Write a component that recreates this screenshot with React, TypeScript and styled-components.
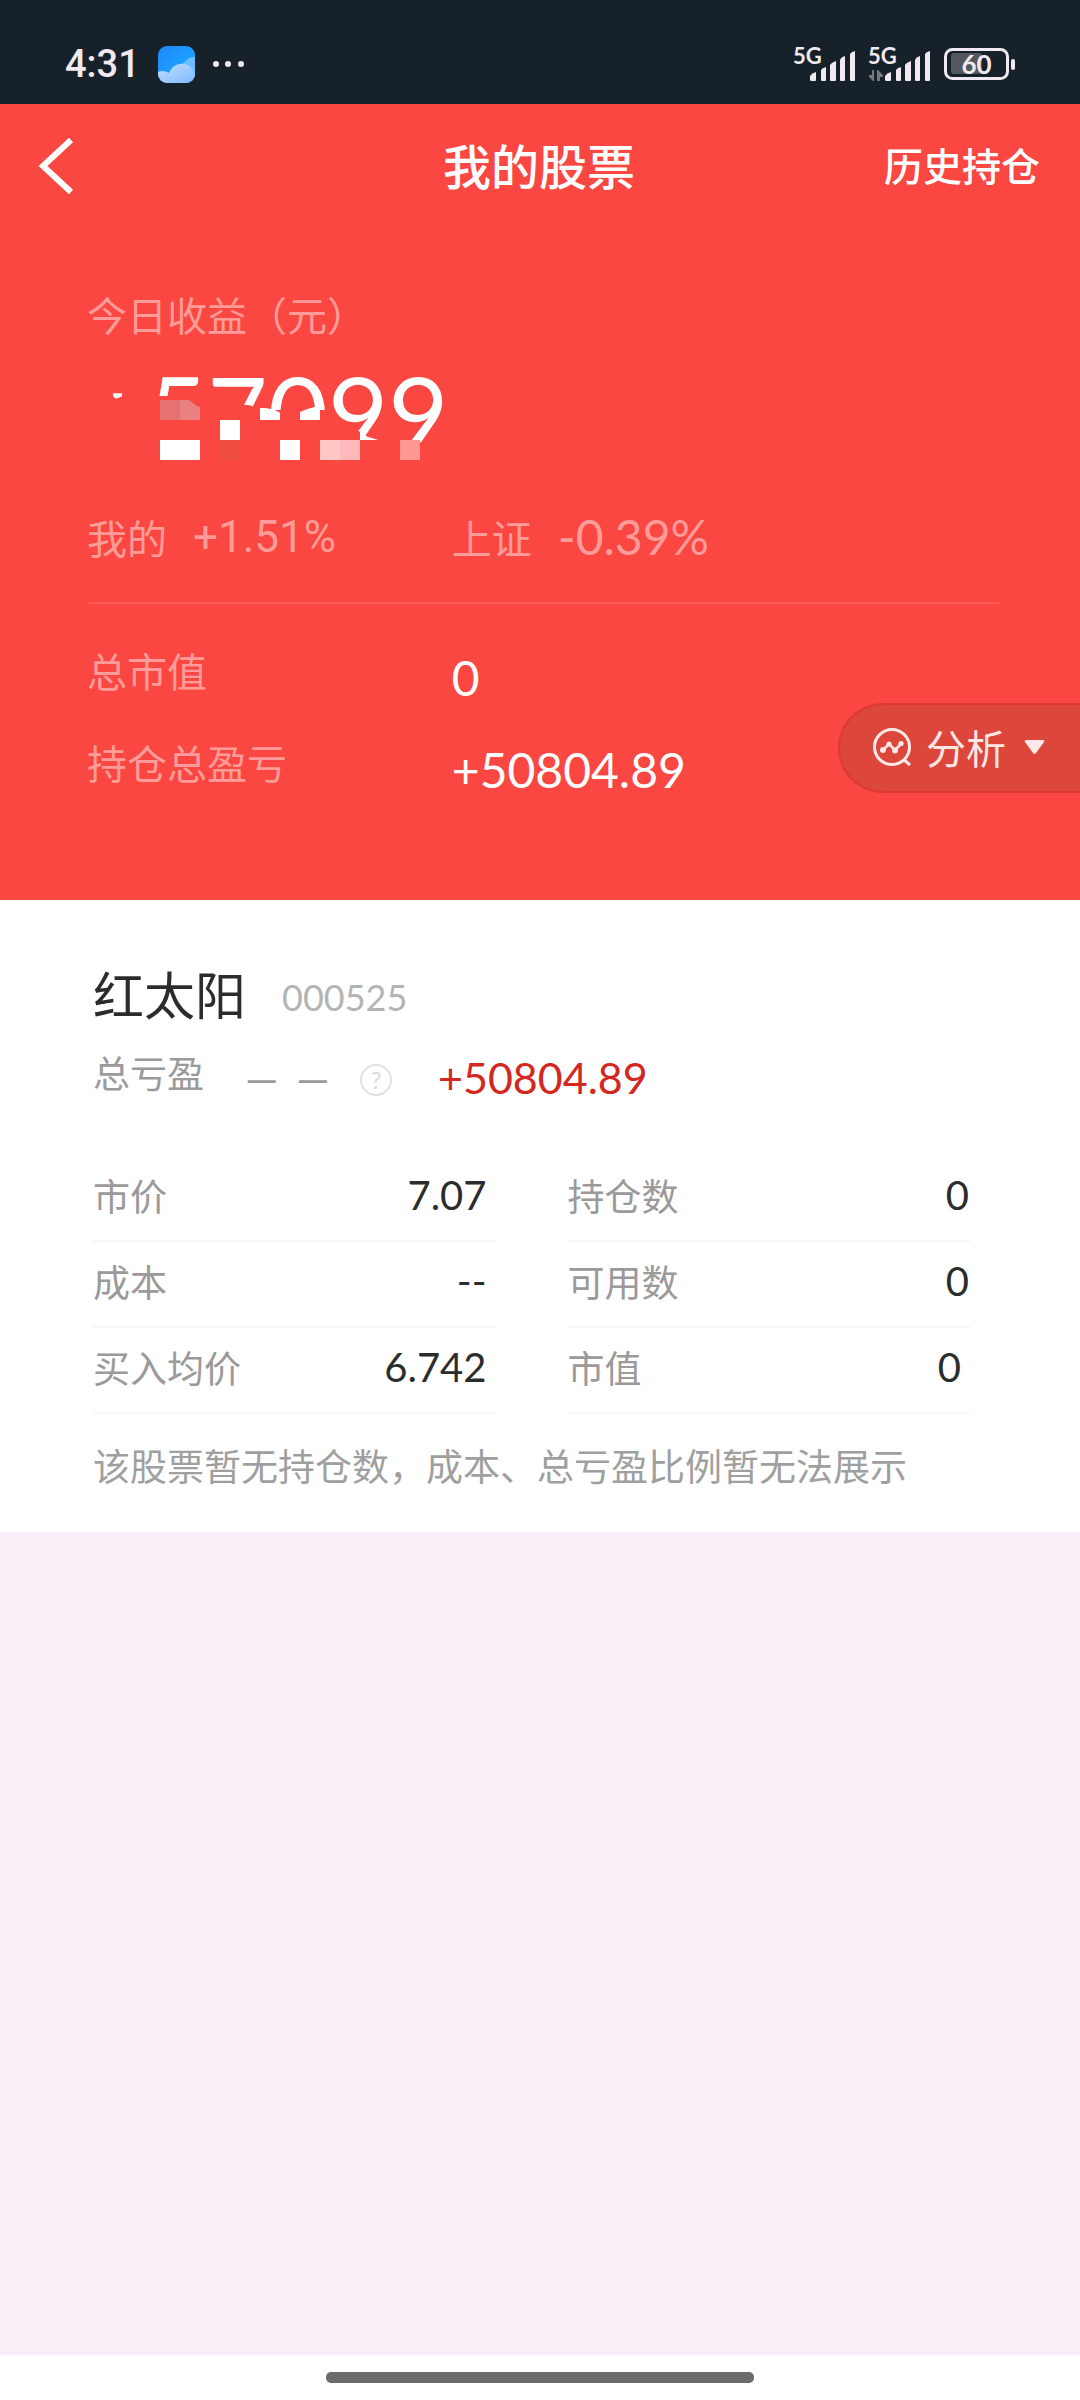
import React from "react";
import styled, { createGlobalStyle } from "styled-components";

const cjk = `"Noto Sans CJK SC", "Noto Sans", sans-serif`;
const numeric = `Lato, "Noto Sans CJK SC", sans-serif`;
const plainOne = `Roboto, "Noto Sans CJK SC", sans-serif`;

const color = {
  status: "#17212a",
  statusInk: "#f0eaf0",
  red: "#fa4741",
  softPink: "#ff9c99",
  ink: "#2b2c2c",
  grey: "#9b999a",
  lightGrey: "#b4b4b4",
  line: "#f7f7f7",
  page: "#f9edf7",
};

const GlobalStyle = createGlobalStyle`
  *, *::before, *::after { box-sizing: border-box; }
  body { margin: 0; background: #fff; font-family: ${cjk}; }
  h1, h2, p, dl, dt, dd { margin: 0; font-weight: 400; }
  button { border: 0; padding: 0; margin: 0; background: none; font: inherit; color: inherit; cursor: pointer; }
  svg { display: block; flex: none; }
`;

const Screen = styled.div`
  min-height: 100vh;
  display: flex;
  flex-direction: column;
  background: ${color.page};
`;

const StatusBar = styled.div`
  height: 104px;
  padding: 24px 64px 0 65px;
  display: flex;
  align-items: center;
  justify-content: space-between;
  background: ${color.status};
  color: ${color.statusInk};
`;

const StatusGroup = styled.div<{ $gap: number }>`
  display: flex;
  align-items: center;
  gap: ${(p) => p.$gap}px;
`;

const Clock = styled.time`
  font: 500 38px/48px ${plainOne};
`;

const Signal = styled.div`
  position: relative;
  width: 62px;
  height: 34px;
`;

const SignalLabel = styled.span`
  position: absolute;
  left: -1px;
  top: 0;
  font: 700 22px/18px ${numeric};
`;

const Battery = styled.div`
  position: relative;
  width: 72px;
  height: 32px;
`;

const BatteryLevel = styled.span`
  position: absolute;
  left: 0;
  top: 0;
  width: 65px;
  text-align: center;
  font: 700 26px/32px ${numeric};
`;

const Hero = styled.header`
  position: relative;
  background: ${color.red};
  color: #fff;
`;

const NavBar = styled.nav`
  height: 124px;
  padding: 0 40px 0 38px;
  display: grid;
  grid-template-columns: 1fr auto 1fr;
  align-items: center;
`;

const BackButton = styled.button`
  justify-self: start;
`;

const Title = styled.h1`
  && { font: 500 48px/60px ${cjk}; }
  padding-bottom: 4px;
`;

const HistoryLink = styled.a`
  justify-self: end;
  padding-bottom: 4px;
  font: 500 39px/56px ${cjk};
  color: inherit;
  text-decoration: none;
`;

const Summary = styled.section`
  padding: 58px 81px 102px 87px;
`;

const SoftLabel = styled.p`
  font-size: 40px;
  line-height: 56px;
  color: ${color.softPink};
`;

const Amount = styled.div`
  position: relative;
  margin-top: 21px;
  padding-left: 60px;
  font: 400 104px/100px ${numeric};
`;

const Mosaic = styled.svg`
  position: absolute;
  left: -27px;
  top: -83px;
`;

const Rates = styled.dl`
  display: grid;
  grid-template-columns: 2fr 3fr;
  margin-top: 46px;
  padding-bottom: 37px;
  border-bottom: 2px solid #fc5c55;
  color: ${color.softPink};
`;

const Rate = styled.div`
  display: flex;
  align-items: center;
  gap: 26px;
  font-size: 40px;
  line-height: 56px;
`;

const RateValue = styled.dd<{ $family: string; $size: number }>`
  font: 400 ${(p) => p.$size}px/56px ${(p) => p.$family};
`;

const Totals = styled.dl`
  display: grid;
  gap: 28px;
  margin-top: 38px;
`;

const TotalRow = styled.div`
  display: grid;
  grid-template-columns: 2fr 3fr;
`;

const TotalLabel = styled.dt`
  font-size: 40px;
  line-height: 56px;
  color: ${color.softPink};
`;

const TotalValue = styled.dd`
  padding-top: 8px;
  font: 400 48px/56px ${numeric};
`;

const AnalyseButton = styled.button`
  position: absolute;
  right: 0;
  bottom: 107px;
  && {
    height: 90px;
    padding: 0 32px 2px 32px;
    border: 2px solid #dd3837;
    border-right: 0;
    border-radius: 45px 0 0 45px;
    background: #dd463b;
    color: #ffe8e6;
    font: 400 40px/56px ${cjk};
  }
  display: flex;
  align-items: center;
  gap: 14px;
`;

const Holding = styled.main`
  padding: 61px 110px 39px 93px;
  background: #fff;
  color: ${color.ink};
`;

const StockHead = styled.div`
  display: flex;
  align-items: flex-start;
  gap: 36px;
`;

const StockName = styled.h2`
  && { font: 400 51px/64px ${cjk}; }
`;

const StockCode = styled.span`
  padding-top: 4px;
  font: 400 36px/64px ${numeric};
  color: ${color.lightGrey};
`;

const ProfitRow = styled.div`
  display: flex;
  align-items: flex-end;
  height: 62px;
  margin-top: 15px;
`;

const ProfitLabel = styled.span`
  align-self: flex-start;
  width: 152px;
  font-size: 37px;
  line-height: 56px;
  color: ${color.grey};
`;

const ProfitRatio = styled.span`
  display: flex;
  gap: 18px;
  width: 115px;
  font: 400 42px/56px ${numeric};
  color: ${color.grey};
`;

const HelpButton = styled.button`
  && {
    width: 32px;
    height: 32px;
    margin: 0 46px 10px 0;
    border: 2px solid #e2dfe1;
    border-radius: 50%;
    color: #dcd9db;
    font: 400 24px/28px ${numeric};
  }
`;

const ProfitValue = styled.strong`
  font: 400 43px/56px ${numeric};
  color: #d3271f;
`;

const Details = styled.dl`
  display: grid;
  grid-template-columns: 1fr 1fr;
  column-gap: 72px;
  margin-top: 50px;
`;

const Detail = styled.div<{ $inset: number }>`
  height: 86px;
  padding: 0 ${(p) => p.$inset}px 6px 0;
  display: flex;
  align-items: center;
  justify-content: space-between;
  border-bottom: 2px solid ${color.line};
`;

const DetailLabel = styled.dt`
  font-size: 37px;
  line-height: 56px;
  color: ${color.grey};
`;

const DetailValue = styled.dd`
  font: 400 40px/56px ${numeric};
`;

const Note = styled.p`
  margin-top: 23px;
  font-size: 37px;
  line-height: 56px;
  color: #a09f9f;
  white-space: nowrap;
`;

const Blank = styled.div`
  flex: 1;
`;

const GestureBar = styled.footer`
  height: 45px;
  padding-top: 17px;
  background: #fff;
`;

const GestureHandle = styled.div`
  width: 428px;
  height: 11px;
  margin: 0 auto;
  border-radius: 5px;
  background: #6c6a6d;
`;

const WeatherIcon = () => (
  <svg width="37" height="37" viewBox="0 0 37 37" aria-hidden="true">
    <defs>
      <linearGradient id="sky" x1="0" y1="0" x2="1" y2="1">
        <stop offset="0" stopColor="#2285fb" />
        <stop offset="0.5" stopColor="#1b9dff" />
        <stop offset="1" stopColor="#2fa8ff" />
      </linearGradient>
      <linearGradient id="cloud" x1="0" y1="0" x2="1" y2="1">
        <stop offset="0" stopColor="#c4e0ff" />
        <stop offset="1" stopColor="#7db9ff" />
      </linearGradient>
      <clipPath id="tile">
        <rect width="37" height="37" rx="9" />
      </clipPath>
    </defs>
    <g clipPath="url(#tile)">
      <rect width="37" height="37" fill="url(#sky)" />
      <path d="M22 20C27 17 28 11 37 11V37H22Z" fill="#6dbcff" />
      <path d="M0 26C4 24 8 25 11 27C14 20 20 17 26 18C32 19 35 23 37 29V37H0Z" fill="url(#cloud)" />
    </g>
  </svg>
);

const Dots = () => (
  <svg width="32" height="8" viewBox="0 0 32 8" fill={color.statusInk} aria-hidden="true">
    <circle cx="3" cy="4" r="3" />
    <circle cx="15" cy="4" r="3" />
    <circle cx="28" cy="4" r="3" />
  </svg>
);

const SignalBars = ({ transfer }: { transfer?: boolean }) => (
  <svg width="62" height="34" viewBox="0 0 62 34" fill={color.statusInk} aria-hidden="true">
    <path d="M16 33V29Q18 26 22 25V33Q22 34 21 34H18Q16 34 16 33Z" />
    <path d="M27 33V23Q28 21 32 20V33Q32 34 31 34H28Q27 34 27 33Z" />
    <path d="M36 33V18Q37 16 42 14V33Q42 34 41 34H37Q36 34 36 33Z" />
    <path d="M46 33V13Q47 10 51 9V33Q51 34 50 34H47Q46 34 46 33Z" />
    <path d="M56 33V7Q57 5 61 4V33Q61 34 60 34H57Q56 34 56 33Z" />
    {transfer && (
      <path d="M3 23H5V34H4L-1 29V28H3ZM8 23H9L14 28V30H11V34H8Z" fill="#77777f" />
    )}
  </svg>
);

const BatteryShape = () => (
  <svg width="72" height="32" viewBox="0 0 72 32" aria-hidden="true">
    <rect x="7" y="5" width="31" height="21" rx="3" fill="#55575f" />
    <rect x="1.5" y="1.5" width="62" height="29" rx="7" fill="none" stroke={color.statusInk} strokeWidth="3" />
    <rect x="67" y="11" width="4" height="11" rx="2" fill={color.statusInk} />
  </svg>
);

/* Pixelation laid over the daily profit; units are thirds of a pixel. */
const PrivacyMosaic = () => (
  <Mosaic width="400" height="200" viewBox="0 0 1200 600" aria-hidden="true">
    <g fill={color.red}>
      <path d="M270 348H430V560H270Z" />
      <path d="M430 372H530L568 376L600 386V560H430Z" />
      <path d="M600 390H800L862 438L900 455V560H600Z" />
      <path d="M890 480H960V560H890ZM960 487H1170V560H960Z" />
    </g>
    <path d="M159 340H186V349L168 356L160 350Z" fill="#fff" />
    <rect x="300" y="360" width="60" height="60" fill="#e57370" />
    <path d="M360 360H386L414 380H420V420H360Z" fill="#eb8080" />
    <g fill="#fff">
      <rect x="300" y="480" width="120" height="60" />
      <rect x="480" y="420" width="60" height="60" />
      <rect x="660" y="480" width="60" height="60" />
      <path d="M600 384H614L640 388L660 398V420H600ZM720 396L740 388L766 380H780V420H720Z" />
      <path d="M900 455L922 470L955 480H900Z" />
    </g>
    <rect x="480" y="480" width="60" height="60" fill="#ee4d40" />
    <rect x="780" y="480" width="60" height="60" fill="#ffc8c6" />
    <rect x="840" y="480" width="60" height="60" fill="#ffb9ba" />
    <rect x="1020" y="480" width="60" height="60" fill="#ff9891" />
  </Mosaic>
);

const AnalyseIcon = () => (
  <svg width="40" height="40" viewBox="0 0 40 40" fill="none" stroke="currentColor" strokeWidth="3" aria-hidden="true">
    <circle cx="20" cy="20" r="17.5" />
    <path d="M31 32L38 38" />
    <path d="M11 23L17 17L23 23L29 17" strokeWidth="2.5" />
    <g fill="currentColor" stroke="none">
      <circle cx="11" cy="23" r="3" />
      <circle cx="17" cy="17" r="2.6" />
      <circle cx="23" cy="23.5" r="3" />
      <circle cx="29" cy="16.5" r="2.6" />
    </g>
  </svg>
);

const details = [
  { label: "市价", value: "7.07", inset: 9 },
  { label: "持仓数", value: "0", inset: 1 },
  { label: "成本", value: "--", inset: 9 },
  { label: "可用数", value: "0", inset: 1 },
  { label: "买入均价", value: "6.742", inset: 9 },
  { label: "市值", value: "0", inset: 9 },
];

export default function App() {
  return (
    <Screen>
      <GlobalStyle />
      <StatusBar>
        <StatusGroup $gap={18}>
          <Clock>4:31</Clock>
          <WeatherIcon />
          <Dots />
        </StatusGroup>
        <StatusGroup $gap={13}>
          <Signal>
            <SignalLabel>5G</SignalLabel>
            <SignalBars />
          </Signal>
          <Signal>
            <SignalLabel>5G</SignalLabel>
            <SignalBars transfer />
          </Signal>
          <Battery>
            <BatteryShape />
            <BatteryLevel>60</BatteryLevel>
          </Battery>
        </StatusGroup>
      </StatusBar>

      <Hero>
        <NavBar>
          <BackButton type="button" aria-label="返回">
            <svg width="38" height="60" viewBox="0 0 38 60" fill="none" stroke="#fff" strokeWidth="6" aria-hidden="true">
              <path d="M33 4L5 30L33 56" />
            </svg>
          </BackButton>
          <Title>我的股票</Title>
          <HistoryLink href="#history">历史持仓</HistoryLink>
        </NavBar>

        <Summary>
          <SoftLabel>今日收益（元）</SoftLabel>
          <Amount>
            57099
            <PrivacyMosaic />
          </Amount>
          <Rates>
            <Rate>
              <dt>我的</dt>
              <RateValue $family={plainOne} $size={44}>+1.51%</RateValue>
            </Rate>
            <Rate>
              <dt>上证</dt>
              <RateValue $family={numeric} $size={48}>-0.39%</RateValue>
            </Rate>
          </Rates>
          <Totals>
            <TotalRow>
              <TotalLabel>总市值</TotalLabel>
              <TotalValue>0</TotalValue>
            </TotalRow>
            <TotalRow>
              <TotalLabel>持仓总盈亏</TotalLabel>
              <TotalValue>+50804.89</TotalValue>
            </TotalRow>
          </Totals>
        </Summary>

        <AnalyseButton type="button">
          <AnalyseIcon />
          分析
          <svg width="28" height="16" viewBox="0 0 28 16" fill="currentColor" aria-hidden="true">
            <path d="M6 1H23Q25 1 24 3L16 14Q14.5 16 13 14L5 3Q4 1 6 1Z" />
          </svg>
        </AnalyseButton>
      </Hero>

      <Holding>
        <StockHead>
          <StockName>红太阳</StockName>
          <StockCode>000525</StockCode>
        </StockHead>
        <ProfitRow>
          <ProfitLabel>总亏盈</ProfitLabel>
          <ProfitRatio>
            <span>—</span>
            <span>—</span>
          </ProfitRatio>
          <HelpButton type="button">?</HelpButton>
          <ProfitValue>+50804.89</ProfitValue>
        </ProfitRow>
        <Details>
          {details.map((d) => (
            <Detail key={d.label} $inset={d.inset}>
              <DetailLabel>{d.label}</DetailLabel>
              <DetailValue>{d.value}</DetailValue>
            </Detail>
          ))}
        </Details>
        <Note>该股票暂无持仓数，成本、总亏盈比例暂无法展示</Note>
      </Holding>

      <Blank />
      <GestureBar>
        <GestureHandle />
      </GestureBar>
    </Screen>
  );
}
